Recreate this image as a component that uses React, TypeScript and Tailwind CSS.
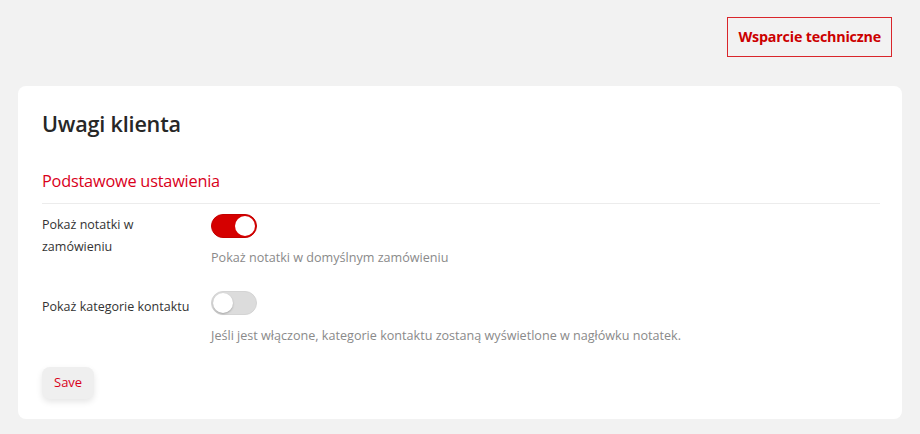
import { useState } from "react";

function Toggle({ on, onChange }: { on: boolean; onChange: (v: boolean) => void }) {
  return (
    <button
      type="button"
      role="switch"
      aria-checked={on}
      onClick={() => onChange(!on)}
      className={
        on
          ? "relative h-6 w-[46px] rounded-full bg-[#d50000] border border-[#c40000]"
          : "relative h-6 w-[46px] rounded-full bg-[#dcdcdc] border border-[#d4d4d4]"
      }
    >
      <span
        className={
          on
            ? "absolute top-[1px] right-[1px] h-5 w-5 rounded-full bg-white"
            : "absolute top-[1px] left-[1px] h-5 w-5 rounded-full bg-white shadow-[0_1px_2px_rgba(0,0,0,0.25)]"
        }
      />
    </button>
  );
}

export default function App() {
  const [showNotes, setShowNotes] = useState(true);
  const [showCategories, setShowCategories] = useState(false);

  return (
    <div className="min-h-[434px] bg-[#f2f2f2] px-[18px] pt-[17px] pb-4 font-['Open_Sans',sans-serif] text-[#333]">
      {/* Top bar */}
      <div className="flex justify-end pr-[10px]">
        <button className="h-10 px-[10px] border border-[#d9262b] text-[#cc0000] text-[14.3px] font-bold tracking-[-0.2px]">
          Wsparcie techniczne
        </button>
      </div>

      {/* Card */}
      <div className="mt-[29px] rounded-lg bg-white px-6 pt-6 pb-5">
        <h1 className="text-[21.6px] font-semibold leading-7 text-[#272727] tracking-[-0.2px]">Uwagi klienta</h1>

        <h2 className="mt-[31px] text-[16.3px] leading-6 text-[#d9001b] tracking-[-0.2px]">Podstawowe ustawienia</h2>
        <div className="mt-[10px] mr-[-2px] h-px bg-[#ececec]" />

        {/* Row 1 */}
        <div className="mt-[10px] flex">
          <div className="w-[169px] shrink-0 pr-[20px] text-[12.5px] leading-[22px] text-[#333]">
            Pokaż notatki w zamówieniu
          </div>
          <div className="flex flex-col">
            <Toggle on={showNotes} onChange={setShowNotes} />
            <p className="mt-[12px] text-[12.6px] leading-4 text-[#8a8a8a]">Pokaż notatki w domyślnym zamówieniu</p>
          </div>
        </div>

        {/* Row 2 */}
        <div className="mt-[25px] flex">
          <div className="w-[169px] shrink-0 pt-[5px] text-[12.5px] leading-[22px] text-[#333]">
            Pokaż kategorie kontaktu
          </div>
          <div className="flex flex-col">
            <Toggle on={showCategories} onChange={setShowCategories} />
            <p className="mt-[13px] text-[12.6px] leading-4 text-[#8a8a8a]">
              Jeśli jest włączone, kategorie kontaktu zostaną wyświetlone w nagłówku notatek.
            </p>
          </div>
        </div>

        <button className="mt-[23px] h-8 rounded-lg bg-[#efefef] px-3 text-[13px] text-[#d9001b] shadow-[0_3px_6px_rgba(0,0,0,0.1)]">
          Save
        </button>
      </div>
    </div>
  );
}
